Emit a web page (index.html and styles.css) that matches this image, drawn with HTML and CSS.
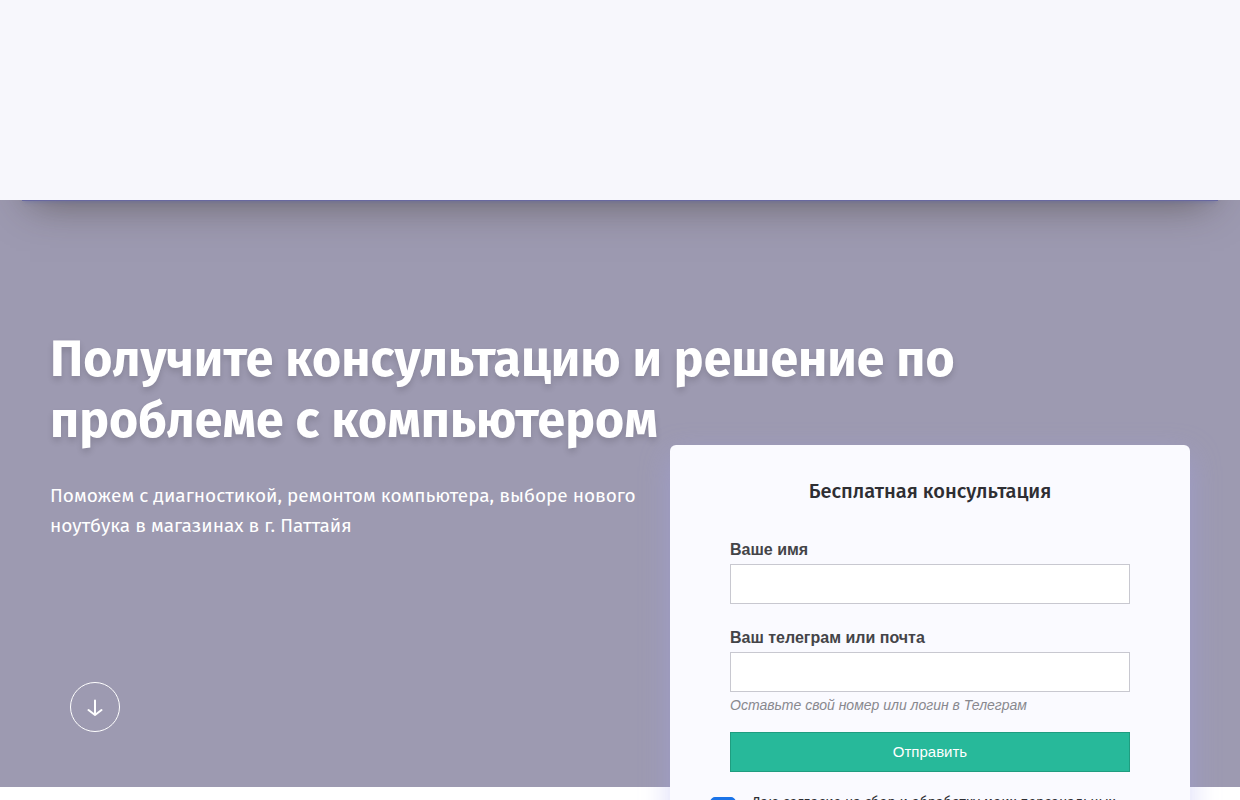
FILE: index.html
```html
<!DOCTYPE html>
<html lang="ru">
<head>
<meta charset="utf-8">
<meta name="viewport" content="width=device-width, initial-scale=1">
<title>Бесплатная консультация</title>
<link rel="stylesheet" href="styles.css">
</head>
<body>
<header class="top"></header>
<main class="hero">
  <h1 class="hero-title">Получите консультацию и решение по проблеме с компьютером</h1>
  <div class="hero-grid">
    <div class="intro">
      <p class="lead">Поможем с диагностикой, ремонтом компьютера, выборе нового ноутбука в магазинах в г. Паттайя</p>
      <a class="down" href="#consult" aria-label="Вниз">
        <svg width="18" height="18" viewBox="0 0 18 18" fill="none" stroke="currentColor" stroke-width="2" stroke-linecap="round" stroke-linejoin="round"><path d="M9 2.5V17M2.5 12L9 17L15.5 12"/></svg>
      </a>
    </div>
    <form class="card" id="consult">
      <h2 class="card-title">Бесплатная консультация</h2>
      <div class="fields">
        <div class="field">
          <label for="name">Ваше имя</label>
          <input class="text" id="name" type="text">
        </div>
        <div class="field">
          <label for="contact">Ваш телеграм или почта</label>
          <input class="text" id="contact" type="text">
          <p class="hint">Оставьте свой номер или логин в Телеграм</p>
        </div>
        <button class="send" type="submit">Отправить</button>
      </div>
      <label class="consent"><input class="tick" type="checkbox" checked><span>Даю согласие на сбор и обработку моих персональных данных</span></label>
    </form>
  </div>
</main>
<section class="after"></section>
</body>
</html>
```
FILE: styles.css
```css
* { box-sizing: border-box; }
body {
  margin: 0;
  background: #fff;
  color: #2e2e33;
  font-family: "Fira Sans", "Noto Sans", sans-serif;
}
h1, h2, p { margin: 0; }
.top {
  position: relative;
  z-index: 1;
  height: 200px;
}
.top::before,
.top::after {
  content: "";
  position: absolute;
  inset: 0;
}
.top::before {
  inset: 20px 22px 0;
  box-shadow:
    0 1px 0 #6868a0,
    0 4px 4px -2px rgba(90, 100, 170, .4),
    0 10px 40px -8px rgba(50, 40, 30, .55);
}
.top::after { background: #f7f7fc; }
.hero {
  padding: 129px 50px 55px;
  background: #9d9ab1;
}
.hero-title {
  max-width: 960px;
  margin-bottom: 30px;
  color: #fff;
  font-size: 50px;
  font-weight: 700;
  line-height: 61px;
  text-shadow: 0 4px 6px rgba(0, 0, 0, .14);
}
.hero-grid {
  display: grid;
  grid-template-columns: 1fr 520px;
  align-items: start;
}
.lead {
  margin-right: 20px;
  color: #fff;
  font-size: 19px;
  line-height: 30px;
}
.down {
  display: flex;
  align-items: center;
  justify-content: center;
  width: 50px;
  height: 50px;
  margin: 141px 0 0 20px;
  border: 1px solid #fff;
  border-radius: 50%;
  color: #fff;
}
.card {
  position: relative;
  z-index: 1;
  margin: -36px 0 -200px;
  padding: 30px 40px;
  border-radius: 6px;
  background: #fafaff;
  box-shadow: 0 10px 30px rgba(160, 160, 240, .4);
}
.card-title {
  margin-bottom: 32px;
  font-size: 20px;
  font-weight: 500;
  line-height: 32px;
  text-align: center;
}
.fields {
  display: grid;
  gap: 18px;
  padding: 0 20px;
  font-family: "Liberation Sans", Arial, sans-serif;
}
.field label {
  display: block;
  padding-top: 1px;
  margin-bottom: 4px;
  color: #444448;
  font-size: 16px;
  font-weight: 700;
  line-height: 20px;
}
.text {
  display: block;
  width: 100%;
  height: 40px;
  padding: 0 10px;
  border: 1px solid #c8c8d0;
  background: #fff;
  font-size: 16px;
}
.field:first-child { margin-bottom: 5px; }
.hint {
  margin-top: 4px;
  color: #88888e;
  font-size: 14px;
  font-style: italic;
  line-height: 18px;
}
.send {
  height: 40px;
  padding: 0 0 2px;
  border: 1px solid #1f9d80;
  background: #27b99a;
  color: #fff;
  font: 15px "Liberation Sans", Arial, sans-serif;
}
.consent {
  display: flex;
  align-items: flex-start;
  gap: 16px;
  margin-top: 21px;
  font-size: 14px;
  line-height: 20px;
}
.tick {
  appearance: none;
  flex: none;
  display: grid;
  place-items: center;
  width: 26px;
  height: 26px;
  margin: 4px 0 0;
  border: 1px solid #1a73e8;
  border-radius: 5px;
  background: #fff;
}
.tick:checked { background: #1a73e8; }
.tick:checked::before {
  content: "";
  width: 7px;
  height: 13px;
  border: solid #fff;
  border-width: 0 3px 3px 0;
  rotate: 45deg;
}
.after {
  min-height: 200px;
  background: #fff;
}
```
